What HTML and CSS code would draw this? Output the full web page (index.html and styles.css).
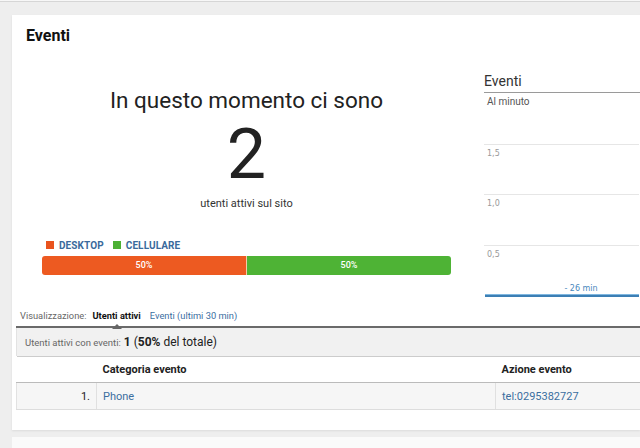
FILE: index.html
```html
<!DOCTYPE html>
<html lang="it">
<head>
<meta charset="utf-8">
<link rel="stylesheet" href="styles.css">
</head>
<body>
<div class="topbar"></div>
<div class="card">
  <h1 class="card-title">Eventi</h1>
  <div class="main">
    <div class="left">
      <div class="now-label">In questo momento ci sono</div>
      <div class="now-num">2</div>
      <div class="now-sub">utenti attivi sul sito</div>
      <div class="legend">
        <span class="sw sw-desk"></span><span class="lg">DESKTOP</span>
        <span class="sw sw-mob"></span><span class="lg">CELLULARE</span>
      </div>
      <div class="bar">
        <div class="seg seg-desk">50%</div>
        <div class="seg seg-mob">50%</div>
      </div>
    </div>
    <div class="right">
      <div class="chart-title">Eventi</div>
      <div class="chart-sub">Al minuto</div>
      <svg class="chart" width="155" height="203" viewBox="0 0 155 203">
        <line x1="0" y1="48.5" x2="155" y2="48.5" stroke="#e6e6e6"/>
        <text x="3" y="60" class="ax">1,5</text>
        <line x1="0" y1="98.5" x2="155" y2="98.5" stroke="#e6e6e6"/>
        <text x="3" y="110" class="ax">1,0</text>
        <line x1="0" y1="149.5" x2="155" y2="149.5" stroke="#e6e6e6"/>
        <text x="3" y="161" class="ax">0,5</text>
        <text x="97" y="195" class="ax ax-blue" text-anchor="middle">- 26 min</text>
        <rect x="1" y="198" width="154" height="3" fill="#3d7fb4"/>
        <line x1="1" y1="198.5" x2="155" y2="198.5" stroke="#7fb7e0" stroke-width="1"/>
      </svg>
    </div>
  </div>
  <div class="view">
    <span class="view-label">Visualizzazione:</span>
    <span class="view-tab active">Utenti attivi</span>
    <span class="view-tab link">Eventi (ultimi 30 min)</span>
  </div>
  <div class="panel">
    <div class="summary"><span class="sum-label">Utenti attivi con eventi:</span> <b>1</b> (<b>50%</b> del totale)</div>
    <table class="tbl">
      <thead>
        <tr><th class="c-idx"></th><th class="c-cat">Categoria evento</th><th class="c-act">Azione evento</th></tr>
      </thead>
      <tbody>
        <tr><td class="c-idx">1.</td><td class="c-cat"><span class="link">Phone</span></td><td class="c-act"><span class="link">tel:0295382727</span></td></tr>
      </tbody>
    </table>
  </div>
</div>
<div class="card2"></div>
</body>
</html>
```
FILE: styles.css
```css
html, body { margin: 0; padding: 0; }
body {
  background: #eeeeee;
  font-family: Roboto, "Liberation Sans", Arial, sans-serif;
  color: #222;
  width: 640px;
  height: 448px;
  overflow: hidden;
}
.topbar {
  height: 1px;
  border-bottom: 1px solid #d6d6d6;
  background: #f7f7f7;
}
.card {
  margin: 13px 0 0 12px;
  background: #fff;
  height: 415px;
  box-shadow: 0 1px 2px rgba(0,0,0,0.08);
}
.card2 {
  margin: 7px 0 0 12px;
  background: #fafafa;
  height: 20px;
}
.card-title {
  margin: 0;
  padding: 11px 0 0 14px;
  font-size: 16px;
  font-weight: 700;
  line-height: 20px;
  color: #111;
}
.main {
  display: flex;
  height: 255px;
}
.left {
  width: 409px;
  padding: 0 29px 0 30px;
  display: flex;
  flex-direction: column;
  align-items: center;
}
.now-label {
  margin-top: 40px;
  font-size: 22.5px;
  line-height: 28px;
  color: #222;
}
.now-num {
  font-size: 70px;
  line-height: 70px;
  font-weight: 400;
  color: #222;
  margin-top: 5px;
}
.now-sub {
  font-size: 11px;
  line-height: 14px;
  margin-top: 8px;
  color: #333;
}
.legend {
  align-self: stretch;
  display: flex;
  align-items: center;
  margin-top: 28px;
  padding-left: 4px;
  height: 12px;
}
.sw {
  width: 8px;
  height: 8px;
  margin-right: 5px;
}
.sw-desk { background: #e9531e; }
.sw-mob { background: #4cb034; margin-left: 9px; }
.lg {
  font-size: 10px;
  font-weight: 700;
  color: #3a6a9c;
  letter-spacing: 0.1px;
}
.bar {
  align-self: stretch;
  display: flex;
  height: 19px;
  margin-top: 5px;
  border-radius: 3px;
  overflow: hidden;
}
.seg {
  flex: 1;
  color: #fff;
  font-size: 9px;
  font-weight: 500;
  line-height: 19px;
  text-align: center;
}
.seg-desk { background: #ed5a21; border-right: 1px solid #f6c9a8; }
.seg-mob { background: #4eb335; }
.right {
  margin-left: 4px;
  flex: 1;
  padding-top: 26px;
}
.chart-title {
  font-size: 14px;
  line-height: 18px;
  color: #333;
  border-bottom: 1px solid #9a9a9a;
  padding-bottom: 2px;
}
.chart-sub {
  font-size: 10px;
  line-height: 14px;
  color: #555;
  padding: 2px 0 0 3px;
}
.chart { display: block; margin-top: -13px; }
.ax {
  font-family: "DejaVu Sans", sans-serif;
  font-size: 8px;
  fill: #999;
}
.ax-blue { fill: #4a88bd; }
.view {
  box-sizing: border-box;
  display: flex;
  align-items: center;
  padding: 4px 0 0 8px;
  height: 25px;
}
.view-label { color: #666; margin-right: 6px; font-size: 9.3px; }
.view-tab { margin-right: 9px; position: relative; font-size: 9.3px; }
.view-tab.active { color: #111; font-weight: 700; }
.view-tab.active::after {
  content: "";
  position: absolute;
  left: 50%;
  bottom: -8px;
  margin-left: -5px;
  border-left: 5px solid transparent;
  border-right: 5px solid transparent;
  border-bottom: 5px solid #666;
}
.link { color: #3b6e9f; }
.panel {
  margin-left: 4px;
  border-top: 2px solid #6a6a6a;
}
.summary {
  background: #f1f1f1;
  height: 28px;
  line-height: 28px;
  padding-left: 8px;
  font-size: 12px;
  color: #222;
  border-left: 1px solid #e2e2e2;
}
.sum-label { font-size: 9.5px; color: #666; }
.tbl {
  width: 100%;
  border-collapse: collapse;
  font-size: 11px;
}
.tbl th {
  text-align: left;
  font-weight: 700;
  height: 25px;
  padding: 0 0 0 6px;
  border-top: 1px solid #cccccc;
  border-bottom: 1px solid #bbbbbb;
  color: #222;
}
.tbl td {
  background: #f6f6f6;
  height: 26px;
  padding: 0 0 0 6px;
  border-bottom: 1px solid #dddddd;
  border-left: 1px solid #e0e0e0;
}
.tbl .c-idx { width: 67px; text-align: right; padding-right: 6px; }
.tbl td.c-idx { border-left: 1px solid #e2e2e2; }
.tbl .c-cat { width: 392px; }
```
